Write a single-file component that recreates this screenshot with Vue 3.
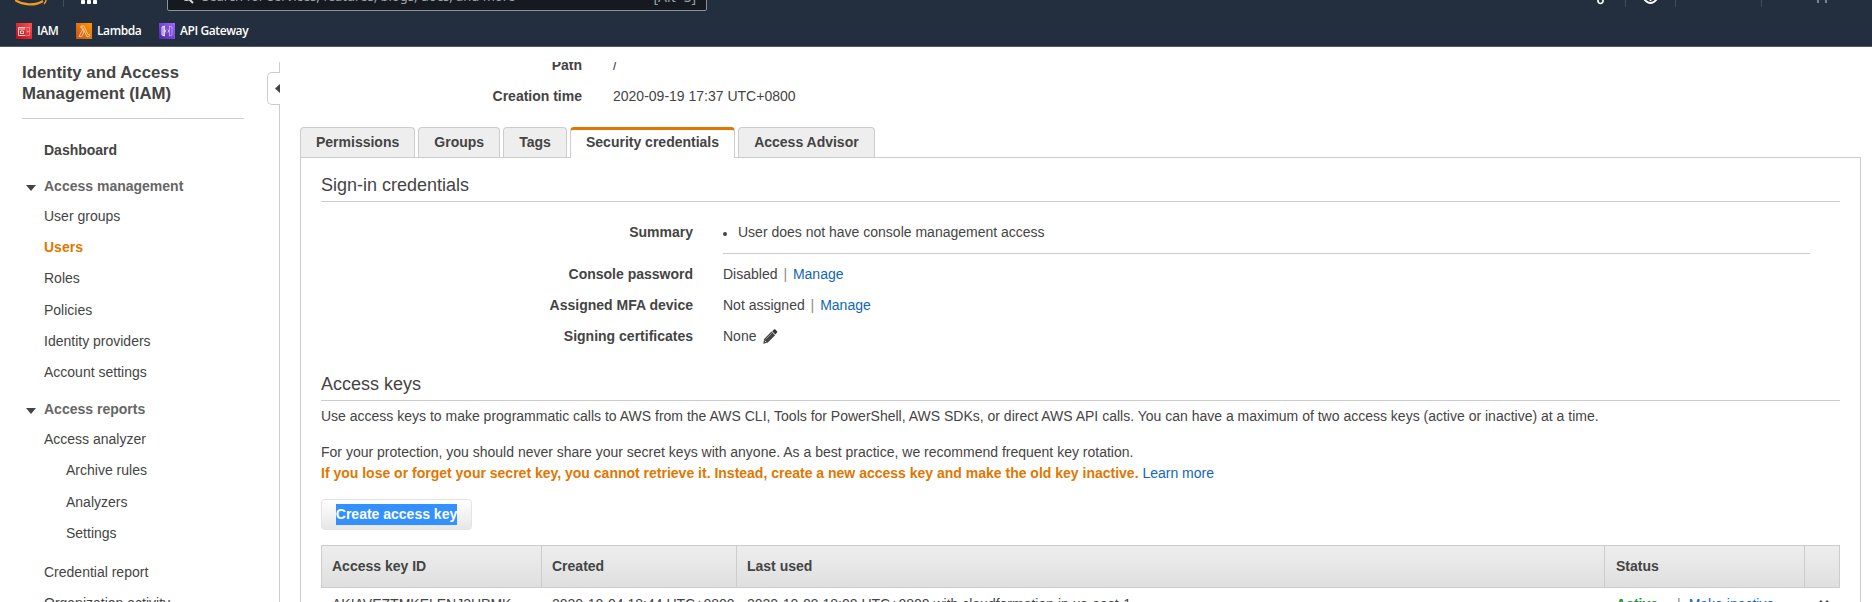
<script setup>
const navItems = ['User groups', 'Users', 'Roles', 'Policies', 'Identity providers', 'Account settings']
const analyzerItems = ['Archive rules', 'Analyzers', 'Settings']
const tabs = ['Permissions', 'Groups', 'Tags', 'Security credentials', 'Access Advisor']
</script>

<template>
  <div class="page">
    <header>
      <div class="topbar">
        <div class="logo">
          <svg width="40" height="10" viewBox="0 0 40 10"><path d="M0 0C8 5.500 20 6 28 1" fill="none" stroke="#f79a1c" stroke-width="2.200" /><path d="M31 0Q31 2 29 4" fill="none" stroke="#f79a1c" stroke-width="1.500" /></svg>
        </div>
        <i class="sep first"></i>
        <svg class="grid" width="17" height="4" viewBox="0 0 17 4" fill="#fff"><rect width="4" height="4" rx=".7" /><rect x="6" width="4" height="4" rx=".7" /><rect x="12" width="4" height="4" rx=".7" /></svg>
        <span class="services">Services</span>
        <div class="search">
          <svg width="12" height="12" viewBox="0 0 12 12" fill="none" stroke="#d5dbdb" stroke-width="2"><circle cx="4.500" cy="4.500" r="3.500" /><path d="M7 7l4 4" /></svg>
          <span class="query">Search for services, features, blogs, docs, and more</span>
          <span class="keys">[Alt+S]</span>
        </div>
        <div class="right">
          <svg width="8" height="5" viewBox="0 0 8 5" fill="none" stroke="#fff" stroke-width="1.700"><path d="M1 0V1a2.500 2.500 0 0 0 5 0V0" /></svg>
          <i class="sep s1"></i>
          <svg class="bell" width="16" height="5" viewBox="0 0 16 5" fill="none" stroke="#fff" stroke-width="1.800"><path d="M1 -1Q7.500 7 14 -1M7.500 -1V1" /></svg>
          <i class="sep s2"></i>
          <span class="region">Global</span>
          <i class="sep s3"></i>
          <span class="support">Support</span>
        </div>
      </div>
      <nav class="favorites">
        <a class="fav iam">
          <svg width="16" height="16" viewBox="0 0 16 16"><defs><linearGradient id="g1" x1="0" y1="1" x2="1" y2="0"><stop stop-color="#bd0816" /><stop offset="1" stop-color="#ff5252" /></linearGradient></defs><rect width="16" height="16" fill="url(#g1)" /><g fill="none" stroke="#fff" stroke-width=".8"><path d="M9 4.500H2.500v8H9" /><path d="M2.500 6H9M4.500 8h3v2.500h-3z" /><path d="M9 4.500h4.500v8H9M11 6v2.500h2.500M11 8.500v2" opacity=".45" /></g></svg>
          <span>IAM</span></a>
        <a class="fav lambda">
          <svg width="16" height="16" viewBox="0 0 16 16"><defs><linearGradient id="g2" x1="0" y1="1" x2="1" y2="0"><stop stop-color="#c8511b" /><stop offset="1" stop-color="#ff9900" /></linearGradient></defs><rect width="16" height="16" fill="url(#g2)" /><path d="M5 3h3l4 8.700 1.200-.5.700 1.600-2.900 1L7 5H5zM6.500 6.500L3 13.500h2.700L8 9z" fill="none" stroke="#fff" stroke-opacity=".85" stroke-width=".7" /></svg>
          <span>Lambda</span></a>
        <a class="fav api">
          <svg width="16" height="16" viewBox="0 0 16 16"><defs><linearGradient id="g3" x1="0" y1="1" x2="1" y2="0"><stop stop-color="#4d27a8" /><stop offset="1" stop-color="#a166ff" /></linearGradient></defs><rect width="16" height="16" fill="url(#g3)" /><g fill="none" stroke="#fff" stroke-width=".8"><path d="M5.500 3L3 4v8l2.500 1zM4.200 3.500v9" /><path d="M10.500 3L13 4v8l-2.500 1z" opacity=".55" /><path d="M7 6.500L6.300 8 7 9.500M9 6.500L9.700 8 9 9.500" opacity=".8" /></g></svg>
          <span>API Gateway</span></a>
      </nav>
    </header>

    <div class="body">
      <aside>
        <h1>Identity and Access<br />Management (IAM)</h1>
        <a class="item dash">Dashboard</a>
        <div class="group"><i class="arrow"></i>Access management</div>
        <ul>
          <li v-for="n in navItems" :key="n" :class="{ current: n === 'Users', roomy: n === 'Policies' }">{{ n }}</li>
        </ul>
        <div class="group reports"><i class="arrow"></i>Access reports</div>
        <ul>
          <li>Access analyzer</li>
          <li v-for="n in analyzerItems" :key="n" class="nested" :class="{ roomy: n === 'Analyzers' }">{{ n }}</li>
          <li class="credential">Credential report</li>
          <li>Organization activity</li>
        </ul>
      </aside>
      <div class="divider">
        <div class="handle"><svg width="5" height="9" viewBox="0 0 5 9"><path d="M5 0v9L0 4.500z" fill="#444" /></svg></div>
      </div>

      <main>
        <dl class="meta">
          <dt>Path</dt><dd>/</dd>
          <dt>Creation time</dt><dd>2020-09-19 17:37 UTC+0800</dd>
        </dl>
        <div class="tabs">
          <div v-for="t in tabs" :key="t" class="tab" :class="{ active: t === 'Security credentials' }">{{ t }}</div>
        </div>
        <section class="panel">
          <h2>Sign-in credentials</h2>
          <dl class="creds">
            <dt>Summary</dt><dd class="summary"><i class="dot"></i>User does not have console management access</dd>
            <dt>Console password</dt><dd>Disabled <span class="bar">|</span> <a>Manage</a></dd>
            <dt>Assigned MFA device</dt><dd>Not assigned <span class="bar">|</span> <a>Manage</a></dd>
            <dt>Signing certificates</dt><dd class="none">None
              <svg width="15" height="15" viewBox="0 0 15 15"><path d="M9.200 2.200L11 .5Q11.700 0 12.400.6L14 2.200q.6.600 0 1.400L12.400 5.400z" fill="#333" /><path d="M8.500 2.600L12.100 6.200 4.600 13.700.3 14.700 1.100 10z" fill="#444" /><path d="M2.600 10.300L8.800 4.200" stroke="#aaa" stroke-width=".8" /><path d="M1.800 11.800l1.500 1.500" stroke="#ddd" stroke-width="1" /></svg>
            </dd>
          </dl>
          <h2 class="keys-title">Access keys</h2>
          <p>Use access keys to make programmatic calls to AWS from the AWS CLI, Tools for PowerShell, AWS SDKs, or direct AWS API calls. You can have a maximum of two access keys (active or inactive) at a time.</p>
          <p class="protect">For your protection, you should never share your secret keys with anyone. As a best practice, we recommend frequent key rotation.<br /><b>If you lose or forget your secret key, you cannot retrieve it. Instead, create a new access key and make the old key inactive.</b> <a>Learn more</a></p>
          <button><span>Create access key</span></button>
          <div class="table">
            <div class="row head"><div>Access key ID</div><div>Created</div><div>Last used</div><div>Status</div><div></div></div>
            <div class="row data"><div class="key-id">AKIAVEZTMKELENJ2HPMK</div><div>2020-10-04 18:44 UTC+0800</div><div>2020-10-09 18:00 UTC+0800 with cloudformation in us-east-1</div><div class="status"><b>Active</b><span class="bar">|</span><a>Make inactive</a></div><div class="close"><svg width="10" height="10" viewBox="0 0 10 10"><path d="M1 1l8 8M9 1L1 9" stroke="#444" stroke-width="2.600" /></svg></div></div>
          </div>
        </section>
      </main>
    </div>
  </div>
</template>

<style>
body { margin: 0; background: #fff; overflow: hidden; }
</style>

<style scoped>
* { box-sizing: border-box; }
.page { width: 1872px; height: 602px; overflow: hidden; background: #fff; color: #444; font: 14px/21px "Liberation Sans", Arial, sans-serif; }
h1, h2, p, ul, dl, dd { margin: 0; padding: 0; }
ul { list-style: none; }
a { color: #1166bb; }
header { height: 47px; background: #232f3e; border-bottom: 1px solid #545b64; font-family: "Noto Sans", "Open Sans", sans-serif; }
.topbar { height: 11px; display: flex; align-items: flex-start; overflow: hidden; }
.logo { width: 63px; padding-left: 15px; }
.logo svg, .right svg, .grid { display: block; }
.sep { width: 1px; height: 7px; background: #414d5c; flex: none; }
.grid { margin-left: 17px; flex: none; }
.services { margin: -14px 0 0 8px; width: 61px; color: #aeb6bd; font-size: 13px; line-height: 18px; }
.search { width: 540px; height: 30px; margin-top: -19px; flex: none; border: 1px solid #879596; border-radius: 2px; background: #16191f; display: flex; align-items: center; padding: 0 10px 0 14px; color: #95a5a6; font-size: 14px; }
.search svg { margin-top: 3px; }
.query { margin-left: 8px; flex: 1; white-space: nowrap; font-size: 13px; }
.right { margin-left: auto; display: flex; width: 275px; }
.s1 { margin-left: 20px; }
.bell { margin-left: 17px; }
.s2 { margin-left: 16px; }
.region, .support { margin-top: -15px; color: #aeb6bd; font-size: 13px; line-height: 20px; width: 45px; flex: none; }
.region { margin-left: 20px; }
.s3 { margin-left: 20px; }
.support { margin-left: 39px; }
.favorites { display: flex; padding: 12px 0 0 16px; color: #fff; font-size: 12px; line-height: 16px; font-weight: 600; }
.fav { display: flex; color: #fff; gap: 5px; height: 16px; white-space: nowrap; font-family: "Open Sans", sans-serif; letter-spacing: -0.4px; }
.iam { width: 60px; }
.lambda { width: 83px; }
.body { display: flex; height: 540px; margin-top: 15px; overflow: hidden; }
aside { width: 267px; padding-left: 22px; flex: none; }
h1 { width: 222px; height: 57px; border-bottom: 1px solid #ccc; font-size: 16.8px; line-height: 21px; white-space: nowrap; }
.item { display: block; color: #444; font-weight: bold; padding-left: 22px; }
.dash { margin-top: 21px; }
.group { font-weight: bold; color: #666; display: flex; align-items: center; height: 21px; margin-top: 15px; }
.arrow { border: 5px solid transparent; border-top: 6px solid #444; border-bottom: 0; margin: 2px 8px 0 4px; }
li { line-height: 21px; height: 21px; margin-top: 10px; padding-left: 22px; white-space: nowrap; }
.group + ul li:first-child { margin-top: 9px; }
.current { color: #e07700; font-weight: bold; }
li.roomy { margin-top: 11px; }
.reports { margin-top: 16px; }
li.nested { padding-left: 44px; }
li.credential { margin-top: 18px; }
.divider { width: 13px; display: flex; flex-direction: column; flex: none; }
.divider::before, .divider::after { content: ""; border-right: 1px solid #ccc; height: 10px; }
.divider::after { height: auto; flex: 1; }
.handle { height: 33px; border: 1px solid #ccc; border-right: 0; border-radius: 5px 0 0 5px; display: flex; align-items: center; justify-content: flex-end; }
main { width: 1561px; margin-left: 20px; }
dl { display: grid; }
dt { font-weight: bold; text-align: right; }
.meta { grid-template-columns: 282px 1fr; column-gap: 31px; row-gap: 10px; margin-top: -7px; }
.tabs { display: flex; margin-top: 20px; gap: 3.100px; height: 30px; }
.tab { height: 30px; border: 1px solid #ccc; border-bottom: 0; border-radius: 4px 4px 0 0; background: #eee; padding: 4px 15px 0; font-weight: bold; white-space: nowrap; }
.tab.active { background: #fff; border-top: 3px solid #e07700; padding-top: 2px; height: 31px; position: relative; z-index: 1; }
.panel { border: 1px solid #ccc; height: 500px; padding: 16px 20px 0; }
h2 { height: 28px; border-bottom: 1px solid #ccc; font-size: 18px; line-height: 22px; font-weight: normal; width: 1519px; }
.creds { grid-template-columns: 372px 1087px; column-gap: 30px; row-gap: 10px; margin-top: 20px; }
.summary { display: flex; align-items: center; height: 32px; padding-bottom: 10px; border-bottom: 1px solid #ccc; }
.dot { width: 4px; height: 4px; border-radius: 2px; background: #444; margin: 2px 11px 0 0; }
.bar { color: #888; margin: 0 2px; }
.none { display: flex; align-items: center; gap: 7px; }
.keys-title { margin-top: 26px; }
p { margin-top: 5px; white-space: nowrap; }
.protect { margin-top: 15px; }
.protect b { color: #e07700; }
button { display: block; width: 151px; height: 31px; margin-top: 15px; padding: 0; border: 1px solid #e4e4e4; border-radius: 4px; background: linear-gradient(#fff, #e7e7e7); font: bold 14px/21px "Liberation Sans", Arial, sans-serif; }
button span { display: inline-block; background: #3390ff; color: #fff; }
.table { margin-top: 15px; width: 1519px; }
.row { display: grid; grid-template-columns: 221px 195px 868px 200px 35px; height: 42px; white-space: nowrap; }
.row > div { padding: 10px 0 0 10px; }
.row.data > div { padding-top: 6px; }
.row > div:first-child { padding-left: 11px; }
.row > div:nth-child(4) { padding-left: 11px; }
.row.data > div.close { padding: 12px 0 0 14px; }
.close svg { display: block; }
.head { height: 43px; font-weight: bold; background: linear-gradient(#eee, #dfdfdf); border: 1px solid #ccc; grid-template-columns: 220px 195px 868px 200px 34px; }
.head > div { border-right: 1px solid #ccc; }
.head > div:first-child { padding-left: 10px; }
.head > div:last-child { border-right: 0; }
.status b { color: #1a9632; }
.status .bar { margin: 0 8px 0 19px; }
</style>
